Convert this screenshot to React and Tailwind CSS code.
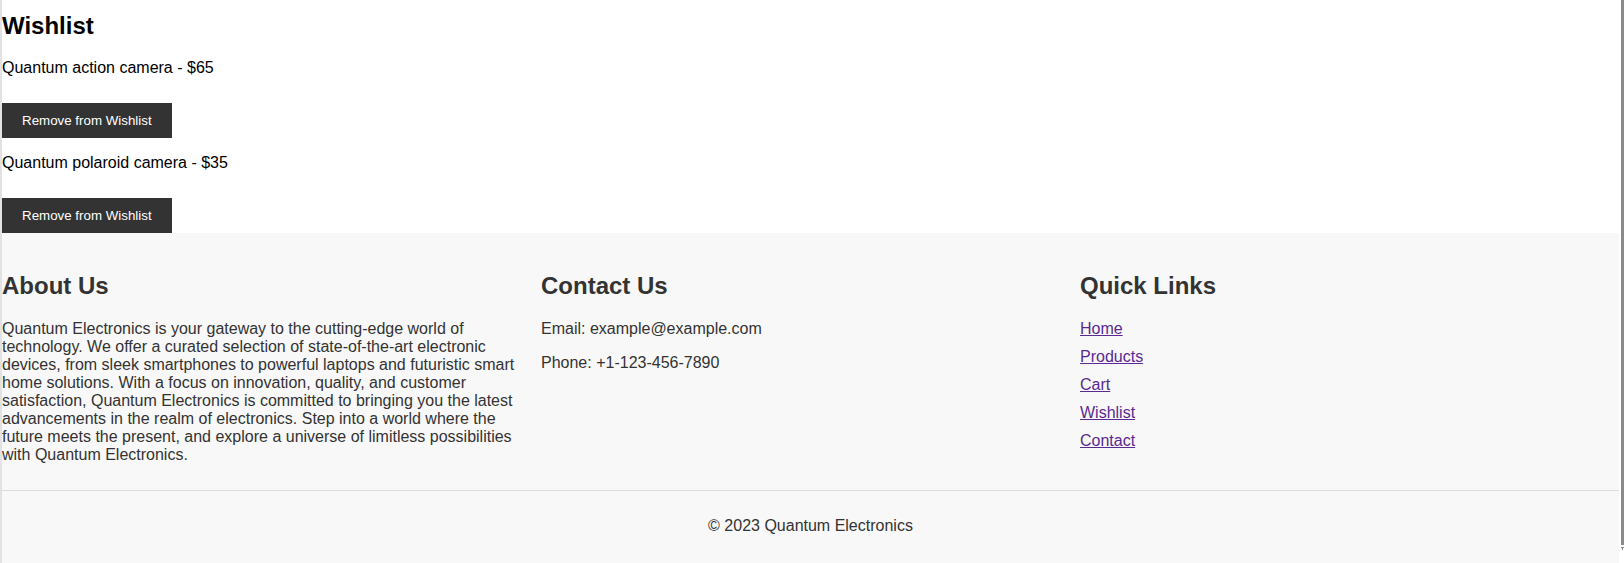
export default function App() {
  const items = [
    { name: "Quantum action camera", price: 65 },
    { name: "Quantum polaroid camera", price: 35 },
  ];
  const links = ["Home", "Products", "Cart", "Wishlist", "Contact"];
  return (
    <div className="flex h-[563px] w-[1624px] overflow-hidden bg-white font-['Liberation_Sans',Arial,sans-serif] text-black">
      <div className="w-[2px] shrink-0 bg-[#e2e2e2]" />
      <div className="flex min-w-0 flex-1 flex-col">
        <main className="bg-white">
          <h2 className="mt-[12px] text-[24px] font-bold leading-[27px]">Wishlist</h2>
          {items.map((it, i) => (
            <div key={i}>
              <p className={(i === 0 ? "mt-[20px]" : "mt-[16px]") + " text-[16px] leading-[18px]"}>
                {it.name} - ${it.price}
              </p>
              <button className="mt-[26px] block cursor-pointer bg-[#333333] px-[20px] py-[10px] text-[13.333px] leading-[15px] text-white">
                Remove from Wishlist
              </button>
            </div>
          ))}
        </main>
        <footer className="flex-1 bg-[#f8f8f8] pt-[20px] text-[#333333]">
          <div className="flex">
            <section className="flex-1">
              <h2 className="mt-[19px] text-[24px] font-bold leading-[27px]">About Us</h2>
              <p className="mt-[21px] mb-[16px] pr-[2px] text-[16px] leading-[18px]">
                Quantum Electronics is your gateway to the cutting-edge world of technology. We offer a curated
                selection of state-of-the-art electronic devices, from sleek smartphones to powerful laptops and
                futuristic smart home solutions. With a focus on innovation, quality, and customer satisfaction,
                Quantum Electronics is committed to bringing you the latest advancements in the realm of
                electronics. Step into a world where the future meets the present, and explore a universe of
                limitless possibilities with Quantum Electronics.
              </p>
            </section>
            <section className="flex-1">
              <h2 className="mt-[19px] text-[24px] font-bold leading-[27px]">Contact Us</h2>
              <p className="mt-[21px] text-[16px] leading-[18px]">Email: example@example.com</p>
              <p className="mt-[16px] text-[16px] leading-[18px]">Phone: +1-123-456-7890</p>
            </section>
            <section className="flex-1">
              <h2 className="mt-[19px] text-[24px] font-bold leading-[27px]">Quick Links</h2>
              <ul className="mt-[21px] text-[16px] leading-[18px]">
                {links.map((l) => (
                  <li key={l} className="mb-[10px]">
                    <a href="#" className="text-[#5a2a92] underline">
                      {l}
                    </a>
                  </li>
                ))}
              </ul>
            </section>
          </div>
          <div className="mt-[10px] border-t border-[#dddddd] pt-[10px] text-center">
            <p className="mt-[16px] text-[16px] leading-[18px]">© 2023 Quantum Electronics</p>
          </div>
        </footer>
      </div>
      <div className="flex w-[5px] shrink-0 flex-col bg-white pl-[2px]">
        <div className="h-[545px] w-[3px] bg-[#8a8a8a]" />
        <svg width="3" height="4" viewBox="0 0 3 4" className="mt-[2px]">
          <path d="M0 0h3v1H2v2H1V1H0z" fill="#8a8a8a" />
        </svg>
      </div>
    </div>
  );
}
